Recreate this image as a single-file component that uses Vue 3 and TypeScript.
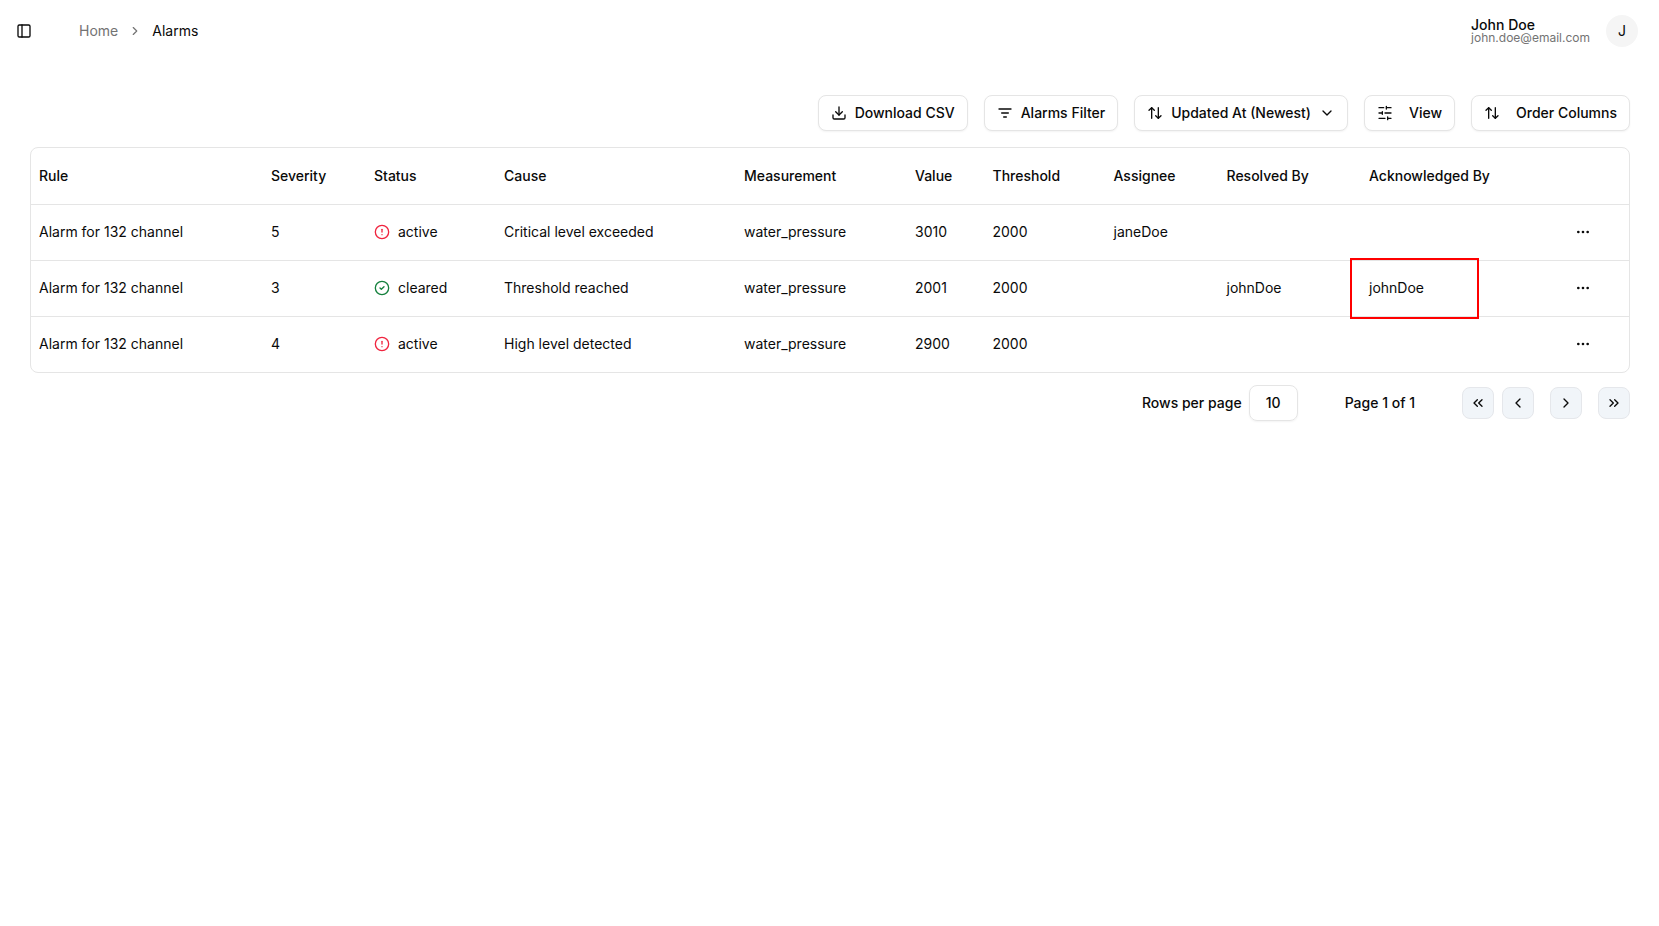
<script setup lang="ts">
interface Alarm {
  rule: string
  severity: number
  status: 'active' | 'cleared'
  cause: string
  measurement: string
  value: number
  threshold: number
  assignee: string
  resolvedBy: string
  acknowledgedBy: string
}

const columns: { label: string; width: number }[] = [
  { label: 'Rule', width: 232 },
  { label: 'Severity', width: 103 },
  { label: 'Status', width: 130 },
  { label: 'Cause', width: 240 },
  { label: 'Measurement', width: 171 },
  { label: 'Value', width: 77.5 },
  { label: 'Threshold', width: 121 },
  { label: 'Assignee', width: 113 },
  { label: 'Resolved By', width: 142.5 },
  { label: 'Acknowledged By', width: 198 },
  { label: '', width: 70 },
]

const alarms: Alarm[] = [
  { rule: 'Alarm for 132 channel', severity: 5, status: 'active', cause: 'Critical level exceeded', measurement: 'water_pressure', value: 3010, threshold: 2000, assignee: 'janeDoe', resolvedBy: '', acknowledgedBy: '' },
  { rule: 'Alarm for 132 channel', severity: 3, status: 'cleared', cause: 'Threshold reached', measurement: 'water_pressure', value: 2001, threshold: 2000, assignee: '', resolvedBy: 'johnDoe', acknowledgedBy: 'johnDoe' },
  { rule: 'Alarm for 132 channel', severity: 4, status: 'active', cause: 'High level detected', measurement: 'water_pressure', value: 2900, threshold: 2000, assignee: '', resolvedBy: '', acknowledgedBy: '' },
]
</script>

<template>
  <div class="page">
    <header class="topbar">
      <div class="left">
        <button class="sidebar-toggle" aria-label="Toggle sidebar">
          <svg class="ic" viewBox="0 0 24 24"><rect x="3" y="3" width="18" height="18" rx="2" /><path d="M9 3v18" /></svg>
        </button>
        <nav class="crumbs">
          <span class="crumb-link">Home</span>
          <svg class="crumb-sep" viewBox="0 0 24 24"><path d="m9 18 6-6-6-6" /></svg>
          <span class="crumb-current">Alarms</span>
        </nav>
      </div>
      <div class="user">
        <div class="user-text">
          <div class="user-name">John Doe</div>
          <div class="user-mail">john.doe@email.com</div>
        </div>
        <div class="avatar">J</div>
      </div>
    </header>

    <main class="content">
      <div class="toolbar">
        <button class="btn">
          <svg class="ic" viewBox="0 0 24 24"><path d="M12 15V3" /><path d="M21 15v4a2 2 0 0 1-2 2H5a2 2 0 0 1-2-2v-4" /><path d="m7 10 5 5 5-5" /></svg>
          Download CSV
        </button>
        <button class="btn">
          <svg class="ic" viewBox="0 0 24 24"><path d="M3 6h18" /><path d="M7 12h10" /><path d="M10 18h4" /></svg>
          Alarms Filter
        </button>
        <button class="btn">
          <svg class="ic" viewBox="0 0 24 24"><path d="m21 16-4 4-4-4" /><path d="M17 20V4" /><path d="m3 8 4-4 4 4" /><path d="M7 4v16" /></svg>
          Updated At (Newest)
          <svg class="ic chev" viewBox="0 0 24 24"><path d="m6 9 6 6 6-6" /></svg>
        </button>
        <button class="btn wide-gap">
          <svg class="ic" viewBox="0 0 24 24"><path d="M21 4h-7M10 4H3M21 12h-9M8 12H3M21 20h-5M12 20H3M14 2v4M8 10v4M16 18v4" /></svg>
          View
        </button>
        <button class="btn wide-gap">
          <svg class="ic" viewBox="0 0 24 24"><path d="m21 16-4 4-4-4" /><path d="M17 20V4" /><path d="m3 8 4-4 4 4" /><path d="M7 4v16" /></svg>
          Order Columns
        </button>
      </div>

      <div class="table-wrap">
        <table class="table">
          <colgroup>
            <col v-for="c in columns" :key="c.label" :style="{ width: c.width + 'px' }" />
          </colgroup>
          <thead>
            <tr>
              <th v-for="c in columns" :key="c.label">{{ c.label }}</th>
            </tr>
          </thead>
          <tbody>
            <tr v-for="(a, i) in alarms" :key="i">
              <td>{{ a.rule }}</td>
              <td>{{ a.severity }}</td>
              <td>
                <span class="status">
                  <svg v-if="a.status === 'active'" class="ic red" viewBox="0 0 24 24"><circle cx="12" cy="12" r="10" /><path d="M12 8v4" /><path d="M12 16h.01" /></svg>
                  <svg v-else class="ic green" viewBox="0 0 24 24"><circle cx="12" cy="12" r="10" /><path d="m9 12 2 2 4-4" /></svg>
                  {{ a.status }}
                </span>
              </td>
              <td>{{ a.cause }}</td>
              <td>{{ a.measurement }}</td>
              <td>{{ a.value }}</td>
              <td>{{ a.threshold }}</td>
              <td>{{ a.assignee }}</td>
              <td>{{ a.resolvedBy }}</td>
              <td class="ack">
                {{ a.acknowledgedBy }}
                <span v-if="a.acknowledgedBy" class="highlight"></span>
              </td>
              <td class="actions">
                <svg class="ic" viewBox="0 0 24 24"><circle cx="12" cy="12" r="1" /><circle cx="19" cy="12" r="1" /><circle cx="5" cy="12" r="1" /></svg>
              </td>
            </tr>
          </tbody>
        </table>
      </div>

      <div class="pager">
        <span class="rows-label">Rows per page</span>
        <div class="rows-box">10</div>
        <span class="page-label">Page 1 of 1</span>
        <div class="pager-btns">
          <button class="pg" aria-label="First"><svg class="ic" viewBox="0 0 24 24"><path d="m11 17-5-5 5-5" /><path d="m18 17-5-5 5-5" /></svg></button>
          <button class="pg" aria-label="Previous"><svg class="ic" viewBox="0 0 24 24"><path d="m15 18-6-6 6-6" /></svg></button>
          <button class="pg next" aria-label="Next"><svg class="ic" viewBox="0 0 24 24"><path d="m9 18 6-6-6-6" /></svg></button>
          <button class="pg next" aria-label="Last"><svg class="ic" viewBox="0 0 24 24"><path d="m6 17 5-5-5-5" /><path d="m13 17 5-5-5-5" /></svg></button>
        </div>
      </div>
    </main>
  </div>
</template>

<style>
html, body { margin: 0; background: #fff; }
</style>

<style scoped>
.page {
  min-height: 926px;
  font-family: Inter, "Liberation Sans", sans-serif;
  font-size: 14px;
  line-height: 20px;
  color: #0a0a0a;
  background: #fff;
}
.ic {
  width: 16px;
  height: 16px;
  flex: none;
  fill: none;
  stroke: currentColor;
  stroke-width: 2;
  stroke-linecap: round;
  stroke-linejoin: round;
}
button {
  font: inherit;
  color: inherit;
  background: none;
  border: 0;
  padding: 0;
}
.topbar {
  height: 62px;
  display: flex;
  align-items: center;
  justify-content: space-between;
  padding: 0 21px 0 16px;
}
.left { display: flex; align-items: center; }
.sidebar-toggle { display: flex; width: 16px; height: 16px; margin-right: 47px; }
.crumbs { display: flex; align-items: center; gap: 10px; }
.crumb-link { color: #737373; }
.crumb-sep { width: 14px; height: 14px; fill: none; stroke: #737373; stroke-width: 2; stroke-linecap: round; stroke-linejoin: round; }
.user { display: flex; align-items: center; gap: 16px; }
.user-name { font-weight: 500; line-height: 14px; }
.user-mail { font-size: 12px; line-height: 12px; color: #737373; }
.avatar {
  width: 32px;
  height: 32px;
  border-radius: 50%;
  background: #f5f5f5;
  display: flex;
  align-items: center;
  justify-content: center;
}
.content { padding: 33px 29px 0 30px; }
.toolbar { display: flex; justify-content: flex-end; gap: 16px; }
.btn {
  height: 36px;
  display: flex;
  align-items: center;
  gap: 8px;
  padding: 0 12px;
  font-weight: 500;
  white-space: nowrap;
  background: #fff;
  border: 1px solid #e5e5e5;
  border-radius: 8px;
  box-shadow: 0 1px 2px rgba(0, 0, 0, 0.05);
}
.wide-gap { gap: 16px; }
.table-wrap {
  margin-top: 16px;
  border: 1px solid #e5e5e5;
  border-radius: 8px;
  overflow: hidden;
}
.table { width: 100%; border-collapse: collapse; table-layout: fixed; }
th, td { padding: 0 8px; text-align: left; white-space: nowrap; }
th { height: 56px; font-weight: 500; }
td { height: 53px; padding-bottom: 2px; border-top: 1px solid #e5e5e5; }
.status { display: flex; align-items: center; gap: 8px; }
.red { color: #f0243f; }
.green { color: #15803d; }
.ack { position: relative; }
.highlight {
  position: absolute;
  left: -11px;
  top: -3px;
  width: 125px;
  height: 57px;
  border: 2px solid #ff0000;
  pointer-events: none;
}
.actions { padding-left: 16px; padding-right: 0; }
.actions .ic { display: block; }
.pager { display: flex; align-items: center; margin-top: 12px; justify-content: flex-end; }
.rows-label { font-weight: 500; }
.rows-box {
  width: 49px;
  height: 36px;
  margin-left: 7px;
  box-sizing: border-box;
  display: flex;
  align-items: center;
  justify-content: center;
  font-weight: 500;
  border: 1px solid #e5e5e5;
  border-radius: 8px;
  box-shadow: 0 1px 2px rgba(0, 0, 0, 0.05);
}
.page-label { font-weight: 500; margin-left: 47px; margin-right: 47px; }
.pager-btns { display: flex; gap: 8px; }
.pg {
  width: 32px;
  height: 32px;
  box-sizing: border-box;
  display: flex;
  align-items: center;
  justify-content: center;
  background: #f1f5f9;
  border: 1px solid #e5e7eb;
  border-radius: 8px;
}
.pg:nth-child(3) { margin-left: 8px; }
.pg:nth-child(4) { margin-left: 8px; }
</style>
